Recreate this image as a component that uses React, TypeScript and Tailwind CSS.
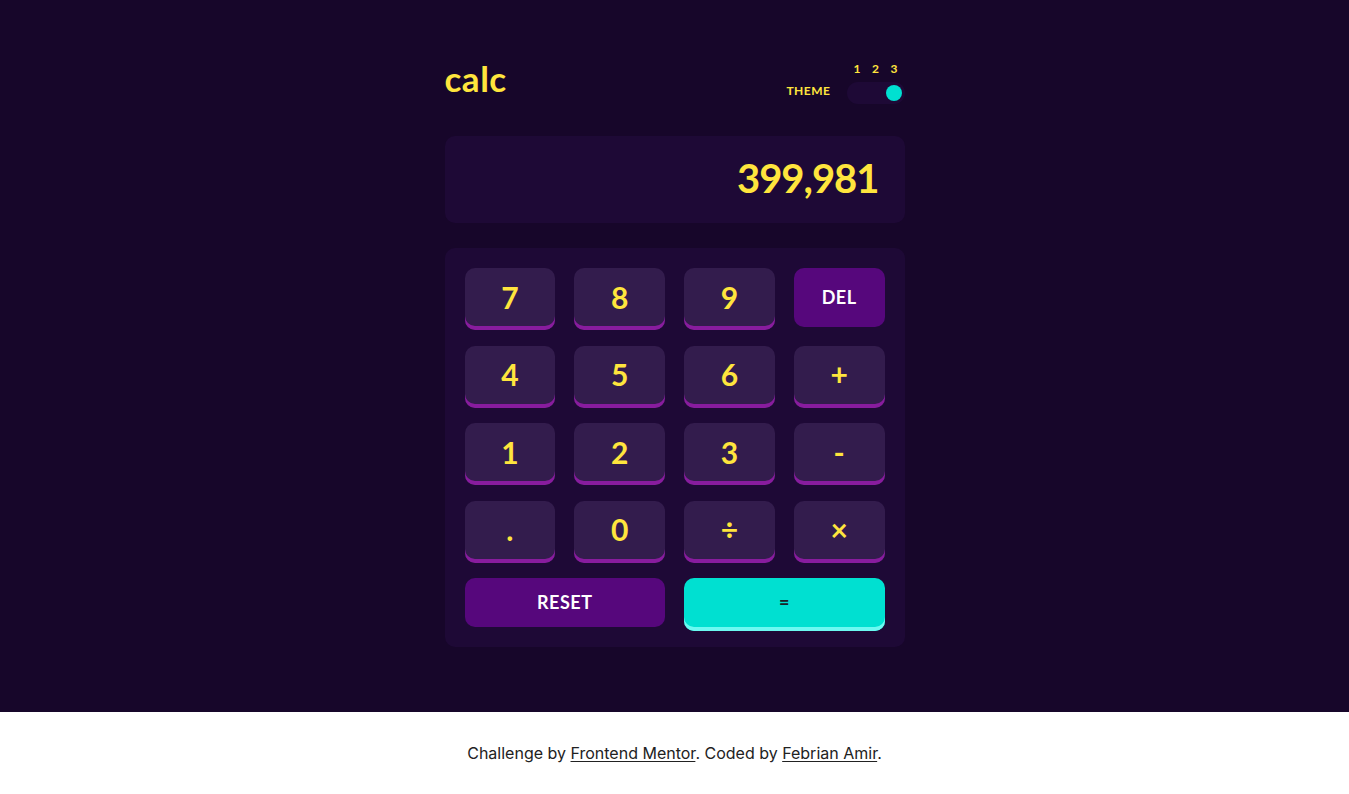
import React from "react";

const keyBase =
  "flex items-center justify-center rounded-[10px] text-[30px] font-bold text-[#ffe53d] bg-[#331c4d] shadow-[inset_0_-4px_0_#881c9e] h-[62px] pb-[4px]";

function Key({ label }: { label: string }) {
  return <button className={keyBase}>{label}</button>;
}

export default function App() {
  const font = { fontFamily: '"Lato", "Noto Sans", sans-serif' };
  return (
    <div className="min-h-[794px] flex flex-col">
      <main className="bg-[#17062a] h-[712px] flex justify-center" style={font}>
        <div className="w-[460px] pt-[60px]">
          <header className="flex items-start justify-between h-[76px]">
            <h1 className="text-[35px] font-bold text-[#ffe53d] leading-none mt-[1px] tracking-[0.5px]">calc</h1>
            <div className="flex items-end gap-[16px] mt-[3px]">
              <span className="text-[12px] font-bold text-[#ffe53d] tracking-[0.5px] mb-[4px]">THEME</span>
              <div className="flex flex-col items-center w-[58px]">
                <div className="flex justify-between w-[44px] text-[12px] font-bold text-[#ffe53d] leading-none mb-[7px]">
                  <span>1</span>
                  <span>2</span>
                  <span>3</span>
                </div>
                <div className="w-[58px] h-[22px] rounded-full bg-[#1e0936] flex items-center justify-end px-[3px]">
                  <span className="w-[16px] h-[16px] rounded-full bg-[#00e0d1]" />
                </div>
              </div>
            </div>
          </header>
          <div className="h-[87px] rounded-[10px] bg-[#1e0936] flex items-center justify-end px-[26px] pb-[4px]">
            <span className="text-[40px] font-bold text-[#ffe53d] leading-none tracking-[-1px]">399,981</span>
          </div>
          <div className="mt-[25px] rounded-[10px] bg-[#1e0936] h-[399px] px-[20px] pt-[20px] grid grid-cols-4 gap-x-[19px] gap-y-[15.5px] content-start">
            <Key label="7" />
            <Key label="8" />
            <Key label="9" />
            <button className="flex items-center justify-center rounded-[10px] h-[59px] bg-[#56077c] text-white text-[18px] font-bold tracking-[0.5px]">DEL</button>
            <Key label="4" />
            <Key label="5" />
            <Key label="6" />
            <Key label="+" />
            <Key label="1" />
            <Key label="2" />
            <Key label="3" />
            <Key label="-" />
            <Key label="." />
            <Key label="0" />
            <Key label="÷" />
            <Key label="×" />
            <button className="col-span-2 flex items-center justify-center rounded-[10px] h-[49px] bg-[#56077c] text-white text-[18px] font-bold tracking-[0.5px]">RESET</button>
            <button className="col-span-2 flex items-center justify-center rounded-[10px] h-[53px] pb-[4px] bg-[#00e0d1] shadow-[inset_0_-4px_0_#6cf9f1] text-[#1a2327] text-[18px] font-bold">=</button>
          </div>
        </div>
      </main>
      <footer
        className="bg-white h-[82px] flex items-center justify-center text-[16px] text-[#222]"
        style={{ fontFamily: '"Inter", sans-serif' }}
      >
        <p>
          Challenge by <a className="underline underline-offset-2">Frontend Mentor</a>. Coded by{" "}
          <a className="underline underline-offset-2">Febrian Amir</a>.
        </p>
      </footer>
    </div>
  );
}
